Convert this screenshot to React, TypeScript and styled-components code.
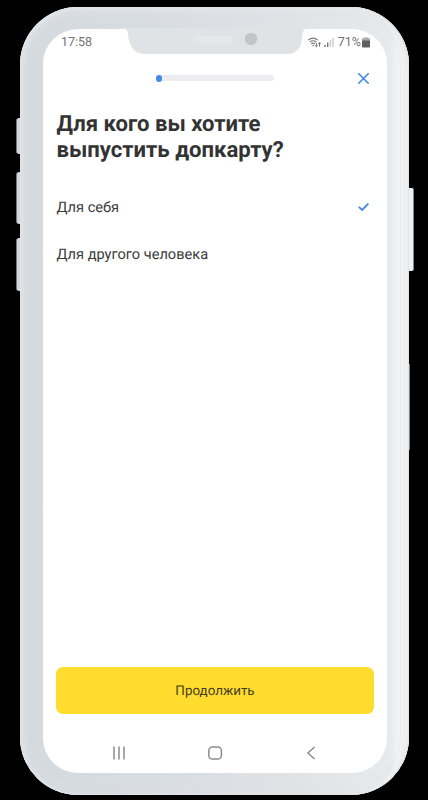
import React, { useState } from "react";
import styled, { createGlobalStyle } from "styled-components";

const GlobalStyle = createGlobalStyle`
  * { box-sizing: border-box; }
  body {
    margin: 0;
    background: #000;
    font-family: Roboto, "Liberation Sans", sans-serif;
    color: #333;
    text-rendering: geometricPrecision;
  }
`;

const Stage = styled.main`
  width: 428px;
  height: 800px;
  padding: 7px 19px 5px 20px;
  background: #000;
  overflow: hidden;
`;

const Phone = styled.div`
  position: relative;
  width: 389px;
  height: 788px;
  padding: 22px 22px 22px 23px;
  border-radius: 58px;
  background:
    linear-gradient(90deg, #d5dadf 0%, #d7dce0 30%, #dfe3e6 70%, #e6eaec 95%, #f0f2f3 97%);
  box-shadow:
    inset 0 0 0 1px #e0e4e7,
    inset 0 3px 7px #e4e8ea,
    inset -7px 0 1px -1px #eef0f2,
    inset 7px 0 2px -1px #d9dee2;
`;

const BezelLine = styled.div`
  position: absolute;
  inset: 8px;
  border: 1px solid #dde1e4;
  border-radius: 50px;
  opacity: 0.45;
`;

const SideButton = styled.div<{ $side: "left" | "right"; $top: number; $height: number; $width?: number }>`
  position: absolute;
  top: ${({ $top }) => $top}px;
  ${({ $side, $width = 4 }) => `${$side}: -${$width}px;`}
  width: ${({ $width = 4 }) => $width}px;
  height: ${({ $height }) => $height}px;
  background: ${({ $side }) => ($side === "left" ? "#d3d8dc" : "#eef1f3")};
  border-radius: ${({ $side }) => ($side === "left" ? "3px 0 0 3px" : "0 2px 2px 0")};
  border-${({ $side }) => $side}: 1px solid ${({ $side }) => ($side === "left" ? "#737779" : "#81878c")};
`;

const Screen = styled.div`
  position: relative;
  display: flex;
  flex-direction: column;
  height: 744px;
  padding: 0 13px;
  border-radius: 35px;
  background: #fff;
`;

const Notch = styled.svg`
  position: absolute;
  left: 79px;
  top: -1px;
  width: 187px;
  height: 26px;
`;

const StatusBar = styled.header`
  display: flex;
  align-items: center;
  height: 26px;
  padding: 1px 4px 0 5px;
  font-size: 12.5px;
  color: #727272;
`;

const Signals = styled.div`
  display: flex;
  align-items: center;
  margin-left: auto;
`;

const SignalIcon = styled.svg`
  width: 28px;
  height: 13px;
  margin-right: 2px;
`;

const BatteryIcon = styled.svg`
  width: 8px;
  height: 11px;
  margin-left: 1px;
`;

const TopBar = styled.div`
  display: grid;
  grid-template-columns: 1fr 118px 1fr;
  align-items: center;
  height: 46px;
`;

const Progress = styled.div`
  grid-column: 2;
  width: 118px;
  height: 6px;
  border-radius: 3px;
  background: #ebedf0;
`;

const ProgressFill = styled.div`
  width: 6px;
  height: 7px;
  border-radius: 3px;
  background: #448aec;
`;

const CloseButton = styled.button`
  justify-self: end;
  display: flex;
  padding: 0;
  margin-right: 5px;
  border: 0;
  background: none;
`;

const Title = styled.h1`
  margin: 10px 0 0 0.5px;
  font-size: 22.1px;
  line-height: 26px;
  font-weight: 700;
  white-space: nowrap;
`;

const Options = styled.div`
  display: flex;
  flex-direction: column;
  margin-top: 20px;
`;

const Option = styled.button`
  display: flex;
  align-items: center;
  justify-content: space-between;
  height: 47px;
  padding: 0 5px 0 0.5px;
  border: 0;
  background: none;
  color: #3b3b3b;
  text-rendering: inherit;
  font: 400 14.6px Roboto, "Liberation Sans", sans-serif;
`;

const ContinueButton = styled.button`
  flex: none;
  height: 47px;
  margin-top: auto;
  padding: 2px 0 0;
  border: 0;
  border-radius: 7px;
  background: #ffdc2d;
  color: #443e24;
  text-rendering: inherit;
  font: 400 13.4px Roboto, "Liberation Sans", sans-serif;
`;

const NavigationBar = styled.nav`
  display: flex;
  align-items: center;
  justify-content: space-between;
  height: 59px;
  padding: 19px 55px 0 55px;
`;

const NavIcon = styled.svg`
  width: 16px;
  height: 16px;
  fill: none;
  stroke: #8c8c8c;
  stroke-width: 1.5;
`;

const choices = ["Для себя", "Для другого человека"];

export default function App() {
  const [selected, setSelected] = useState(0);

  return (
    <>
      <GlobalStyle />
      <Stage>
        <Phone>
          <SideButton $side="left" $top={111} $height={36} />
          <SideButton $side="left" $top={165} $height={52} />
          <SideButton $side="left" $top={231} $height={53} />
          <SideButton $side="right" $top={181} $height={83} $width={5} />
          <SideButton $side="right" $top={357} $height={86} $width={1} />
          <BezelLine />
          <Screen>
            <Notch viewBox="0 0 187 26" aria-hidden="true">
              <path d="M0 0V.8C4 .8 5.4 2 5.8 5.4C7 18 12 26 23 26H164C175 26 179.3 20 180 10C180.4 3.5 181.5 .8 186 .8V0Z" fill="#dfe3e6" />
              <rect x="71" y="8" width="41" height="8" rx="4" fill="#e4e7e9" />
              <path d="M75 9H108" stroke="#eaedef" strokeWidth="1" />
              <circle cx="129" cy="11" r="6.2" fill="#c2c4c6" />
            </Notch>
            <StatusBar>
              <span>17:58</span>
              <Signals>
                <SignalIcon viewBox="0 0 28 13" fill="none" aria-hidden="true">
                  <path d="M.2 4.1Q5 .2 9.8 4.1M1.8 6Q5 3.5 8.2 6M3.2 7.8Q5 6.4 6.8 7.8" stroke="#777" strokeWidth="1.1" />
                  <path d="M4 9L5.3 10.5L6.4 9Z" fill="#777" />
                  <path d="M8.4 6.8V10.7M7.2 9.5L8.4 10.7L9.6 9.5M11.5 10.6V6.7M10.3 7.9L11.5 6.7L12.7 7.9" stroke="#666" strokeWidth=".9" />
                  <path d="M17 11V9M19.7 11V6.5" stroke="#777" strokeWidth="1.4" />
                  <path d="M22.4 11V4M25 11V2" stroke="#ccc" strokeWidth="1.4" />
                </SignalIcon>
                <span>71%</span>
                <BatteryIcon viewBox="0 0 8 11" aria-hidden="true">
                  <path d="M2 1.2V.5H6V1.2H8V4H0V1.2Z" fill="#aaa" />
                  <path d="M0 3.5H8V9.5Q8 10.5 7 10.5H1Q0 10.5 0 9.5Z" fill="#606060" />
                </BatteryIcon>
              </Signals>
            </StatusBar>
            <TopBar>
              <Progress><ProgressFill /></Progress>
              <CloseButton aria-label="Закрыть">
                <svg width="11" height="11" viewBox="0 0 11 11" stroke="#4287e2" strokeWidth="1.6" strokeLinecap="round">
                  <path d="M.8 .8L10.2 10.2M10.2 .8L.8 10.2" />
                </svg>
              </CloseButton>
            </TopBar>
            <Title>Для кого вы хотите<br />выпустить допкарту?</Title>
            <Options>
              {choices.map((choice, index) => (
                <Option key={choice} onClick={() => setSelected(index)}>
                  <span>{choice}</span>
                  {selected === index && (
                    <svg width="11" height="10" viewBox="0 0 11 10" fill="none" stroke="#4287e2" strokeWidth="1.8">
                      <path d="M.8 4.8L4.1 8L10.4 1.7" />
                    </svg>
                  )}
                </Option>
              ))}
            </Options>
            <ContinueButton>Продолжить</ContinueButton>
            <NavigationBar>
              <NavIcon viewBox="0 0 16 16"><path d="M3 1.5V14.5M8 1.5V14.5M13 1.5V14.5" /></NavIcon>
              <NavIcon viewBox="0 0 16 16"><rect x="1.8" y="2" width="12.6" height="12" rx="3.6" /></NavIcon>
              <NavIcon viewBox="0 0 16 16"><path d="M11.5 2L5 8L11.5 14" /></NavIcon>
            </NavigationBar>
          </Screen>
        </Phone>
      </Stage>
    </>
  );
}
